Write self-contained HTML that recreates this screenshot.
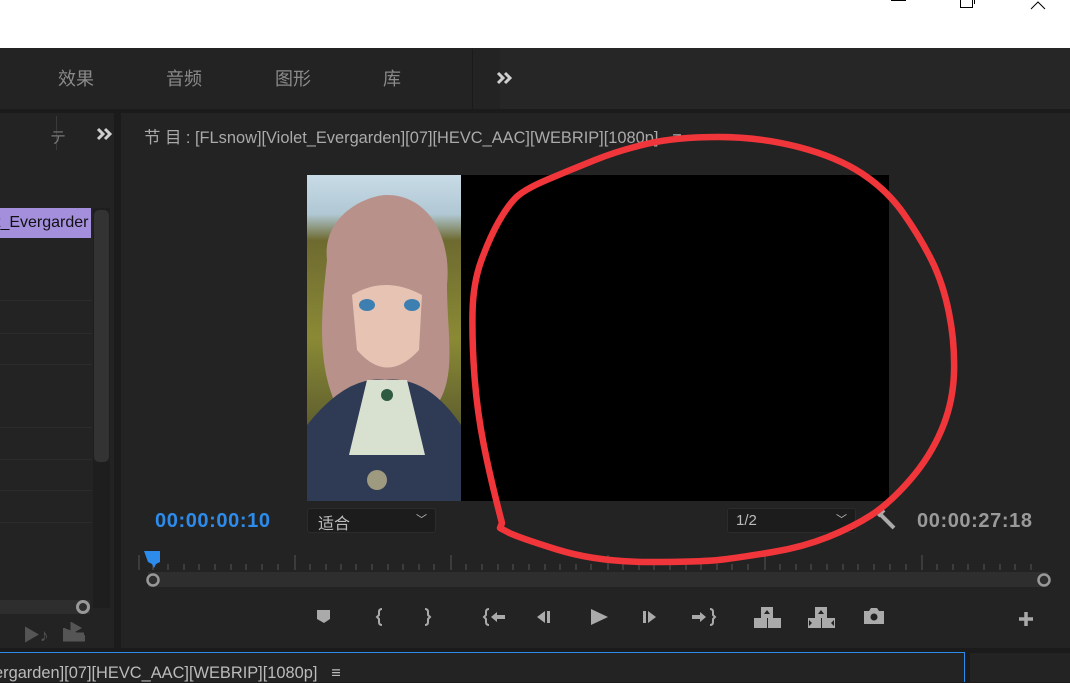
<!DOCTYPE html>
<html><head><meta charset="utf-8"><style>
*{margin:0;padding:0;box-sizing:border-box}
body{width:1070px;height:682px;overflow:hidden;background:#1b1b1b;font-family:"Liberation Sans","Noto Sans CJK SC",sans-serif;position:relative}
.a{position:absolute}
.tab{position:absolute;top:65px;font-size:18px;color:#8a8a8a}
</style></head><body>
<div class="a" style="left:0;top:0;width:1070px;height:48px;background:#fff"></div>
<div class="a" style="left:891px;top:0;width:15px;height:1px;background:#000"></div>
<div class="a" style="left:960px;top:-2px;width:13px;height:10px;border:1px solid #000"></div>
<div class="a" style="left:967px;top:-4px;width:8px;height:8px;border-right:1px solid #000"></div>
<svg class="a" style="left:1030px;top:0" width="18" height="10"><path d="M1 9L8 2L15 9" stroke="#000" fill="none"/></svg>
<div class="a" style="left:0;top:48px;width:1070px;height:61px;background:#232323"></div>
<div class="a" style="left:500px;top:48px;width:570px;height:61px;background:#262626"></div>
<div class="a" style="left:472px;top:49px;width:1px;height:60px;background:#1a1a1a"></div>
<div class="tab" style="left:58px">效果</div>
<div class="tab" style="left:166px">音频</div>
<div class="tab" style="left:275px">图形</div>
<div class="tab" style="left:383px">库</div>
<svg class="a" style="left:496px;top:71px" width="18" height="14" fill="none" stroke="#cfcfcf" stroke-width="3"><path d="M2 2l5 5-5 5M9 2l5 5-5 5"/></svg>
<!-- left panel -->
<div class="a" style="left:0;top:113px;width:114px;height:535px;background:#232323"></div>
<div class="a" style="left:56px;top:116px;width:1px;height:34px;background:#3a3a3a"></div>
<div class="a" style="left:50px;top:124px;color:#777;font-size:16px">テ</div>
<svg class="a" style="left:96px;top:127px" width="18" height="14" fill="none" stroke="#cfcfcf" stroke-width="3"><path d="M2 2l5 5-5 5M9 2l5 5-5 5"/></svg>
<div class="a" style="left:0;top:208px;width:91px;height:30px;background:#a48fdc;color:#111;font-size:16px;padding-top:6px;white-space:nowrap;overflow:hidden;text-indent:-4px">t_Evergarder</div>
<div class="a" style="left:93px;top:208px;width:17px;height:400px;background:#1e1e1e"></div>
<div class="a" style="left:94px;top:210px;width:15px;height:252px;background:#333;border-radius:5px"></div>
<div class="a" style="left:0;top:300px;width:92px;height:1px;background:#2c2c2c"></div>
<div class="a" style="left:0;top:333px;width:92px;height:1px;background:#2c2c2c"></div>
<div class="a" style="left:0;top:364px;width:92px;height:1px;background:#2c2c2c"></div>
<div class="a" style="left:0;top:427px;width:92px;height:1px;background:#2c2c2c"></div>
<div class="a" style="left:0;top:459px;width:92px;height:1px;background:#2c2c2c"></div>
<div class="a" style="left:0;top:490px;width:92px;height:1px;background:#2c2c2c"></div>
<div class="a" style="left:0;top:522px;width:92px;height:1px;background:#2c2c2c"></div>
<div class="a" style="left:0;top:600px;width:90px;height:14px;background:#2e2e2e"></div>
<div class="a" style="left:76px;top:600px;width:14px;height:14px;border:3px solid #999;border-radius:50%"></div>
<div class="a" style="left:23px;top:621px;color:#555;font-size:17px">▶♪</div>
<svg class="a" style="left:63px;top:622px" width="22" height="20"><path d="M1 6v12h20v-5M9 12h12M9 2l7 4-7 4z" fill="#555" stroke="#555" stroke-width="3"/></svg>
<!-- program monitor -->
<div class="a" style="left:121px;top:113px;width:949px;height:535px;background:#232323"></div>
<div class="a" style="left:144px;top:124px;color:#aaa;font-size:16.4px;white-space:nowrap">节 目 : [FLsnow][Violet_Evergarden][07][HEVC_AAC][WEBRIP][1080p]&nbsp;&nbsp;&nbsp;≡</div>
<div class="a" style="left:307px;top:175px;width:582px;height:326px;background:#000"></div>
<svg class="a" style="left:307px;top:175px" width="154" height="326">
<defs><linearGradient id="bg" x1="0" y1="0" x2="0" y2="1"><stop offset="0" stop-color="#c8dbe6"/><stop offset=".12" stop-color="#b0c8d4"/><stop offset=".2" stop-color="#6e6a30"/><stop offset=".5" stop-color="#8a8a35"/><stop offset="1" stop-color="#3a3a2a"/></linearGradient></defs>
<rect width="154" height="326" fill="url(#bg)"/>
<path d="M20 85C15 40 60 20 80 20C120 20 145 60 140 110C140 160 150 200 130 230L120 250L35 250L25 220C10 180 15 130 20 85Z" fill="#b7918a"/>
<path d="M45 120Q78 100 115 120L112 175Q80 210 50 175Z" fill="#e6c3b3"/>
<ellipse cx="60" cy="130" rx="8" ry="6" fill="#3c7fb0"/><ellipse cx="105" cy="130" rx="8" ry="6" fill="#3c7fb0"/>
<path d="M0 250Q40 200 78 205Q120 200 154 250V326H0Z" fill="#2f3a55"/>
<path d="M60 205L100 205L118 280L42 280Z" fill="#d8e0d0"/>
<circle cx="80" cy="220" r="6" fill="#2d5a40"/>
<circle cx="70" cy="305" r="10" fill="#9e9a80"/>
</svg>
<div class="a" style="left:155px;top:510px;color:#2d8ceb;font-size:20px;font-weight:bold;letter-spacing:0.6px">00:00:00:10</div>
<div class="a" style="left:307px;top:508px;width:129px;height:25px;background:#1c1c1c;border:1px solid #2c2c2c;border-radius:3px;color:#bbb;font-size:16px;padding:1px 10px">适合<span style="position:absolute;right:8px;top:2px;font-size:11px">﹀</span></div>
<div class="a" style="left:727px;top:508px;width:129px;height:25px;background:#1c1c1c;border:1px solid #2c2c2c;border-radius:3px;color:#bbb;font-size:15px;padding:3px 8px">1/2<span style="position:absolute;right:8px;top:2px;font-size:11px">﹀</span></div>
<svg class="a" style="left:876px;top:510px" width="22" height="22"><path d="M4 4l14 14" stroke="#aaa" stroke-width="4"/><path d="M2 6l6-6" stroke="#aaa" stroke-width="4"/></svg>
<div class="a" style="left:917px;top:510px;color:#9a9a9a;font-size:20px;font-weight:bold;letter-spacing:0.6px">00:00:27:18</div>
<!-- ruler -->
<svg class="a" style="left:138px;top:550px" width="920" height="45">
<g stroke="#555" stroke-width="1">
<path d="M1 5v15M15 14v6M30 14v6M46 14v6M61 14v6M77 14v6M93 14v6M108 14v6M124 14v6M140 14v6M157 5v15M172 14v6M188 14v6M203 14v6M218 14v6M234 14v6M250 14v6M265 14v6M281 14v6M296 14v6M313 5v15M328 14v6M344 14v6M360 14v6M375 14v6M391 14v6M407 14v6M422 14v6M438 14v6M453 14v6M470 5v15M485 14v6M501 14v6M516 14v6M532 14v6M548 14v6M563 14v6M579 14v6M594 14v6M610 14v6M627 5v15M642 14v6M658 14v6M673 14v6M689 14v6M705 14v6M720 14v6M736 14v6M752 14v6M768 14v6M784 5v15M799 14v6M815 14v6M830 14v6M846 14v6M862 14v6M877 14v6M893 14v6"/>
</g>
<rect x="10" y="22" width="900" height="15" fill="#2e2e2e"/>
<path d="M6 1h16v11l-4 2-2 4-2-4-4-2z" fill="#2d8ceb"/>
<circle cx="15" cy="30" r="5.5" fill="none" stroke="#999" stroke-width="2.5"/>
<circle cx="906" cy="30" r="5.5" fill="none" stroke="#999" stroke-width="2.5"/>
</svg>
<!-- buttons -->
<svg class="a" style="left:300px;top:600px" width="740" height="35" fill="#aaa" stroke="#aaa">
<path d="M17 10h13v9l-6 4-7-4z" stroke="none"/>
<path d="M82 9q-3 0-3 3v3l-2 2 2 2v3q0 3 3 3" fill="none" stroke-width="2"/>
<path d="M125 9q3 0 3 3v3l2 2-2 2v3q0 3-3 3" fill="none" stroke-width="2"/>
<path d="M189 9q-3 0-3 3v3l-2 2 2 2v3q0 3 3 3" fill="none" stroke-width="2"/>
<path d="M191 17l6-5v3h8v4h-8v3z" stroke="none"/>
<path d="M237 17l8-6v12z M247 11h3v12h-3z" stroke="none"/>
<path d="M291 9l17 8-17 8z" stroke="none"/>
<path d="M343 11h3v12h-3z M348 11l8 6-8 6z" stroke="none"/>
<path d="M392 15h8v-3l6 5-6 5v-3h-8z" stroke="none"/>
<path d="M410 9q3 0 3 3v3l2 2-2 2v3q0 3-3 3" fill="none" stroke-width="2"/>
<path d="M461 7h12v11h-12z M454 18h13v10h-13z M468 18h13v10h-13z" stroke="none"/>
<path d="M464 14l3-4 3 4z" fill="#232323" stroke="none"/>
<path d="M515 7h12v11h-12z M508 18h13v10h-13z M522 18h13v10h-13z" stroke="none"/>
<path d="M518 14l3-4 3 4z M509 20v6l3-3z M534 20v6l-3-3z" fill="#232323" stroke="none"/>
<path d="M564 11h5l2-3h6l2 3h5v13h-20z" stroke="none"/>
<circle cx="574" cy="17" r="3.5" fill="#232323" stroke="none"/>
<path d="M719 19h14M726 12v14" stroke-width="3.5"/>
</svg>
<svg class="a" style="left:0;top:0" width="1070" height="682" fill="none">
<path d="M546.5,180 Q570,170 595,160 Q620,150 648.5,143.5 Q677,137 718.5,137 Q760,137 798.5,147 Q837,157 862,173.5 Q887,190 903.5,213.5 Q920,237 931.5,260 Q943,283 949,313 Q955,343 954,373 Q953,403 941.5,430 Q930,457 910,480 Q890,503 871.5,515 Q853,527 828,537 Q803,547 773,552 Q743,557 723,559.5 Q703,562 650,562 Q597,562 557,549.5 Q517,537 508.5,532.5 L500,528 L502,523 Q490,477 483.5,443.5 Q477,410 474.5,376.5 Q472,343 472.5,313 Q473,283 481.5,260 Q490,237 498.5,222 Q507,207 515,198.5 Q523,190 546.5,180Z" stroke="#f0363a" stroke-width="6.5" stroke-linejoin="round"/>
</svg>
<!-- bottom panel -->
<div class="a" style="left:0;top:652px;width:965px;height:30px;background:#232323;border-top:1px solid #2d8ceb;border-right:1px solid #2d8ceb"></div>
<div class="a" style="left:970px;top:653px;width:100px;height:29px;background:#232323"></div>
<div class="a" style="left:-6px;top:664px;color:#bbb;font-size:16.4px;white-space:nowrap">ergarden][07][HEVC_AAC][WEBRIP][1080p]&nbsp;&nbsp;&nbsp;≡</div>
</body></html>
